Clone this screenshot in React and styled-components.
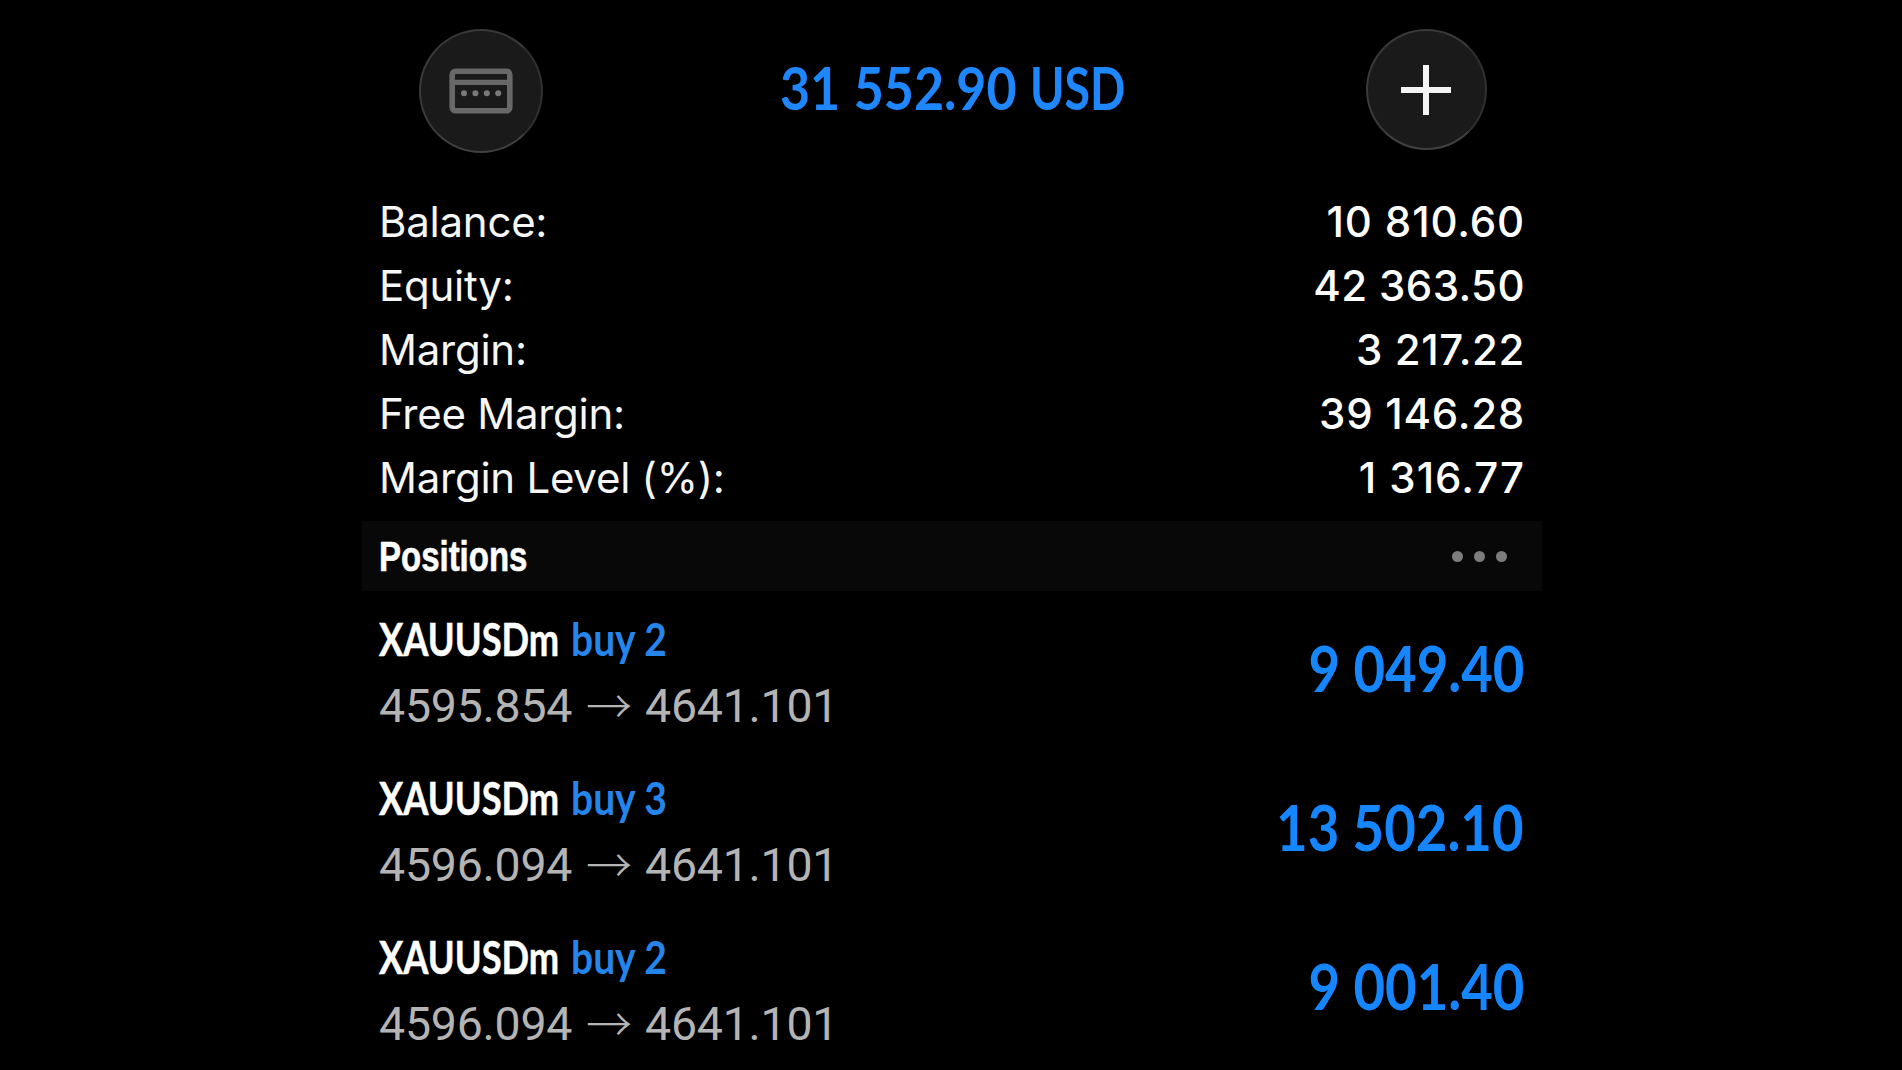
import React from "react";
import styled, { createGlobalStyle } from "styled-components";

const Global = createGlobalStyle`
  body { margin: 0; background: #000; overflow: hidden; }
  * { box-sizing: border-box; }
`;

const Screen = styled.main`
  width: 1180px;
  height: 1070px;
  margin-left: 362px;
  overflow: hidden;
  background: #000;
  color: #fff;
`;

const Header = styled.header`
  display: flex;
  justify-content: space-between;
  align-items: flex-start;
  height: 190px;
  padding: 29px 55px 0 57px;
`;

const RoundButton = styled.button`
  display: flex;
  align-items: center;
  justify-content: center;
  width: ${(p) => p.$size}px;
  height: ${(p) => p.$size}px;
  padding: 0 1px 0 0;
  border: 2px solid;
  border-color: #393939 #303030 #404040 #3a3a3a;
  border-radius: 50%;
  background: #1a1a1a;
`;

const Condensed = styled.span`
  display: block;
  flex: none;
  white-space: pre;
  font-family: Lato, "Liberation Sans", sans-serif;
  font-weight: 700;
  transform: scaleX(${(p) => p.$scale});
  transform-origin: ${(p) => p.$origin || "left"} center;
`;

const Total = styled.div`
  display: flex;
  width: 346px;
  margin: 22px 0 0 -4px;
  font-size: 60px;
  line-height: 72px;
  word-spacing: 1px;
  color: #1f87fe;
`;

const TotalAmount = styled.div`
  width: 250px;
`;

const Stats = styled.dl`
  margin: 0;
  padding: 0 17px 0 17px;
  height: 331px;
`;

const Stat = styled.div`
  display: flex;
  justify-content: space-between;
  height: 64px;
  font: 400 42px/64px Inter, sans-serif;
`;

const Label = styled.dt`
  letter-spacing: -0.25px;
  color: #f6f6f6;
`;

const Value = styled.dd`
  margin: 0;
  font-weight: 500;
  letter-spacing: ${(p) => p.$tracking}px;
`;

const SectionBar = styled.div`
  display: flex;
  align-items: center;
  justify-content: space-between;
  height: 70px;
  padding: 0 35px 0 17px;
  background: #080808;
`;

const SectionTitle = styled(Condensed)`
  font-family: "Liberation Sans", sans-serif;
  font-size: 42px;
  line-height: 70px;
  padding-top: 1px;
  -webkit-text-stroke: 0.6px #fff;
`;

const More = styled.div`
  display: flex;
  gap: 11px;
`;

const Dot = styled.i`
  width: 11px;
  height: 11px;
  border-radius: 50%;
  background: #7c7c7c;
`;

const Position = styled.article`
  display: flex;
  justify-content: space-between;
  height: 159px;
  padding: 15px 18px 9px 17px;
`;

const Instrument = styled.div`
  display: flex;
  height: 66px;
  line-height: 66px;
  font-size: 45.5px;
`;

const SymbolBox = styled.div`
  width: 192px;
  -webkit-text-stroke: 0.5px #fff;
`;

const Side = styled(Condensed)`
  color: #2585ea;
`;

const Prices = styled.div`
  display: flex;
  height: 69px;
  font: 400 46.5px/69px Roboto, "Liberation Sans", sans-serif;
  letter-spacing: -0.25px;
  color: #b4b4b4;
`;

const Price = styled.span`
  width: ${(p) => p.$w || "auto"};
`;

const Arrow = styled.span`
  width: 59px;
  font-family: "Noto Sans CJK SC", sans-serif;
  font-weight: 300;
  font-size: 46px;
  line-height: 62px;
`;

const Profit = styled(Condensed)`
  height: 124px;
  font-size: 64px;
  line-height: 124px;
  color: #1686ff;
`;

const stats = [
  ["Balance:", "10 810.60", 0.85],
  ["Equity:", "42 363.50", 0.4],
  ["Margin:", "3 217.22", 0.6],
  ["Free Margin:", "39 146.28", 0.75],
  ["Margin Level (%):", "1 316.77", 1],
];

const positions = [
  { side: "buy 2", open: "4595.854", now: "4641.101", profit: "9 049.40" },
  { side: "buy 3", open: "4596.094", now: "4641.101", profit: "13 502.10" },
  { side: "buy 2", open: "4596.094", now: "4641.101", profit: "9 001.40" },
];

export default function App() {
  return (
    <>
      <Global />
      <Screen>
        <Header>
          <RoundButton $size={124} aria-label="Accounts">
            <svg width="64" height="46" viewBox="0 0 64 46" fill="none">
              <rect x="3.2" y="3.2" width="57.6" height="39.6" rx="3.5" stroke="#686868" strokeWidth="5.6" />
              <path d="M4 14.4H60" stroke="#686868" strokeWidth="5.4" />
              <g fill="#7a7a7a">
                <circle cx="15" cy="25.3" r="3" />
                <circle cx="26.4" cy="25.3" r="3" />
                <circle cx="37.8" cy="25.3" r="3" />
                <circle cx="49.2" cy="25.3" r="3" />
              </g>
            </svg>
          </RoundButton>
          <Total>
            <TotalAmount>
              <Condensed $scale={0.865}>31 552.90</Condensed>
            </TotalAmount>
            <Condensed $scale={0.775}>USD</Condensed>
          </Total>
          <RoundButton $size={121} aria-label="New order">
            <svg width="50" height="50" viewBox="0 0 50 50" stroke="#f4f4f4" strokeWidth="6">
              <path d="M25 0V50M0 25H50" />
            </svg>
          </RoundButton>
        </Header>
        <Stats>
          {stats.map(([label, value, tracking]) => (
            <Stat key={label}>
              <Label>{label}</Label>
              <Value $tracking={tracking}>{value}</Value>
            </Stat>
          ))}
        </Stats>
        <SectionBar>
          <SectionTitle $scale={0.785}>Positions</SectionTitle>
          <More>
            <Dot />
            <Dot />
            <Dot />
          </More>
        </SectionBar>
        {positions.map((p, i) => (
          <Position key={i}>
            <div>
              <Instrument>
                <SymbolBox>
                  <Condensed $scale={0.797}>XAUUSDm</Condensed>
                </SymbolBox>
                <Side $scale={0.857}>{p.side}</Side>
              </Instrument>
              <Prices>
                <Price $w="207px">{p.open}</Price>
                <Arrow>→</Arrow>
                <Price>{p.now}</Price>
              </Prices>
            </div>
            <Profit $scale={0.852} $origin="right">{p.profit}</Profit>
          </Position>
        ))}
      </Screen>
    </>
  );
}
